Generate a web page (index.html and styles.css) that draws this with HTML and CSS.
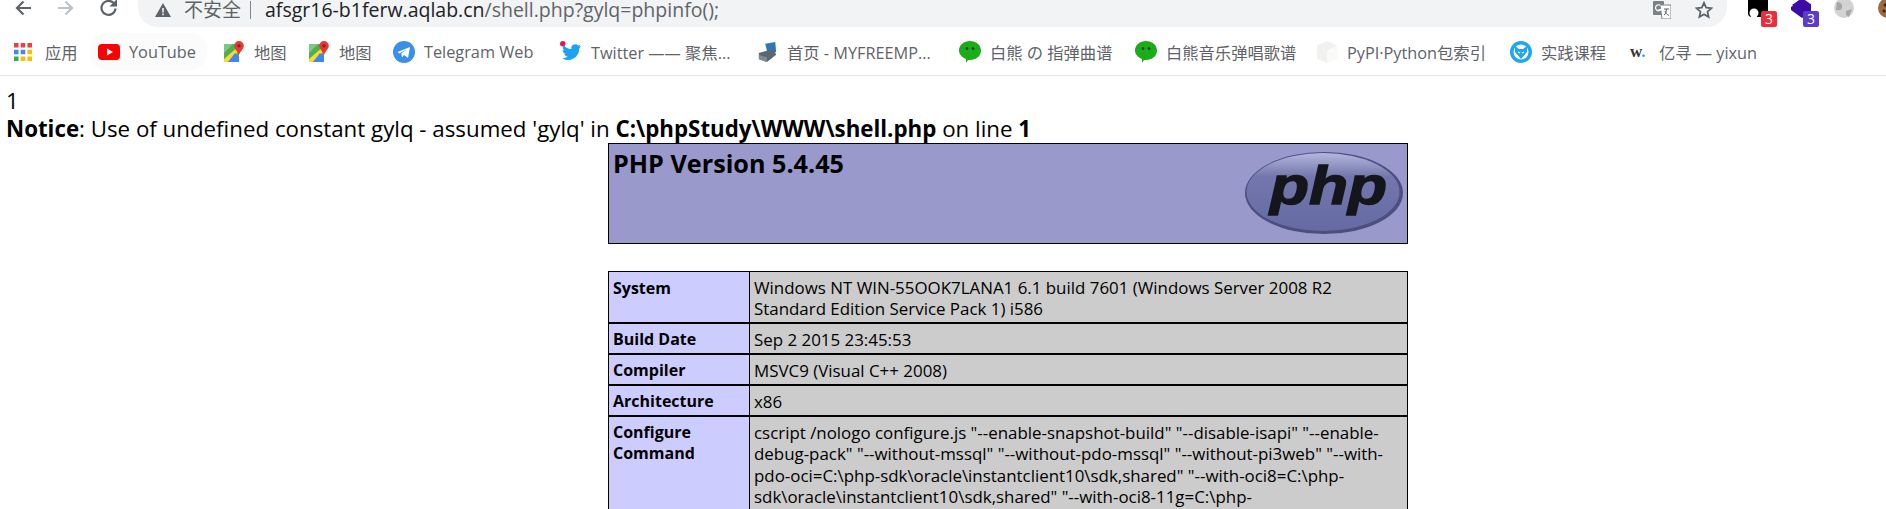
FILE: index.html
```html
<!DOCTYPE html>
<html lang="zh">
<head>
<meta charset="utf-8">
<title>phpinfo()</title>
<link rel="stylesheet" href="styles.css">
</head>
<body>
<header class="chrome">
  <div class="toolbar">
    <div class="nav">
      <svg class="nav-icon" viewBox="0 0 18 18"><path d="M17 9H3M9.500 2.500 3 9l6.500 6.500" fill="none" stroke="#5f6368" stroke-width="2.200"/></svg>
      <svg class="nav-icon" viewBox="0 0 18 18"><path d="M1 9h14M8.500 2.500 15 9l-6.500 6.500" fill="none" stroke="#bdc1c6" stroke-width="2.200"/></svg>
      <svg class="nav-icon" viewBox="0 0 18 18"><path d="M15.500 9.500A7 7 0 1 1 13.500 4" fill="none" stroke="#5f6368" stroke-width="2.200"/><path d="M17 0v7.500H9.500z" fill="#5f6368"/></svg>
    </div>
    <div class="omnibox">
      <svg class="warn" viewBox="0 0 16 14"><path d="M8 0 16 14H0z" fill="#5f6368"/><path d="M7.200 5h1.600v4.600H7.200zM7.200 10.600h1.600v1.600H7.200z" fill="#f1f3f4"/></svg>
      <span class="insecure">不安全</span>
      <span class="sep"></span>
      <span class="url"><span class="host">afsgr16-b1ferw.aqlab.cn</span>/shell.php?gylq=phpinfo();</span>
      <svg class="translate" viewBox="0 0 18 18"><rect x="0" y="0" width="11" height="14" rx="1" fill="#7d8185"/><path d="M7 4h11v14H9z" fill="#fff" stroke="#7d8185"/><path d="M11 8h5M13.500 8c0 3-1 5-2.500 6M12 10c.5 2 2 3.500 4 4.500" fill="none" stroke="#5f6368"/><path d="M7.500 4.500A3 3 0 1 0 8 8.500H5.500" fill="none" stroke="#fff" stroke-width="1.200"/></svg>
      <svg class="star" viewBox="0 0 18 18"><path d="m9 1.800 2.200 4.800 5.200.6-3.900 3.500 1.100 5.200L9 13.300l-4.600 2.600 1.100-5.200L1.600 7.200l5.200-.6z" fill="none" stroke="#5f6368" stroke-width="1.800"/></svg>
    </div>
    <div class="extensions">
      <div class="ext">
        <svg viewBox="0 0 20 20"><rect x="0" y="-6" width="20" height="23" rx="4" fill="#000"/><circle cx="6" cy="13" r="4.500" fill="#fff"/></svg>
        <span class="badge badge-red">3</span>
      </div>
      <div class="ext">
        <svg viewBox="0 0 20 20"><path d="M11-2 21 5 11 12 1 5z" fill="#3c0ca8"/><path d="M0 7l3-2 8 6 8-6 2 2v3l-10 8-11-8z" fill="#3c0ca8"/></svg>
        <span class="badge badge-purple">3</span>
      </div>
      <svg class="ext-globe" viewBox="0 0 20 20"><circle cx="10" cy="8" r="10" fill="#d3d3d3"/><path d="M3 2c4 0 6 3 5 6s-4 2-6 2zM12 11l6-2-3 8-3-2z" fill="#a6a6a6"/></svg>
      <svg class="ext-cookie" viewBox="0 0 20 20"><circle cx="11" cy="8" r="10" fill="#9a6a42"/><circle cx="8" cy="5" r="1.500" fill="#3d2412"/><circle cx="7" cy="11" r="1.500" fill="#3d2412"/></svg>
    </div>
  </div>
  <nav class="bookmarks">
    <a class="bm bm-apps">
      <svg class="bm-icon apps" viewBox="0 0 18 18"><g fill="#ea4335"><rect width="4.500" height="4.500"/><rect x="6.750" width="4.500" height="4.500"/><rect x="13.500" width="4.500" height="4.500"/></g><g fill="#4285f4"><rect y="6.750" width="4.500" height="4.500"/><rect x="6.750" y="6.750" width="4.500" height="4.500"/></g><rect x="13.500" y="6.750" width="4.500" height="4.500" fill="#fbbc04"/><rect y="13.500" width="4.500" height="4.500" fill="#34a853"/><g fill="#fbbc04"><rect x="6.750" y="13.500" width="4.500" height="4.500"/><rect x="13.500" y="13.500" width="4.500" height="4.500"/></g></svg>
      <span>应用</span>
    </a>
    <a class="bm bm-yt">
      <svg class="bm-icon" viewBox="0 0 22 16"><rect width="22" height="16" rx="4" fill="#f00"/><path d="m9 4.500 6 3.500-6 3.500z" fill="#fff"/></svg>
      <span>YouTube</span>
    </a>
    <a class="bm bm-map">
      <svg class="bm-icon" viewBox="0 0 20 22"><path d="M0 3h15v18H0z" fill="#4caf50"/><path d="M0 3h9L0 12z" fill="#81c784"/><path d="M0 18 15 5v5L4 21H0z" fill="#fdd835"/><path d="M4 21h11v-6l-4-3z" fill="#4285f4"/><path d="M15 0a4.800 4.800 0 0 1 4.800 4.800C19.800 8 16.500 10 15 14c-1.500-4-4.800-6-4.800-9.200A4.800 4.800 0 0 1 15 0z" fill="#e53935"/><circle cx="15" cy="4.800" r="1.600" fill="#8e1c17"/></svg>
      <span>地图</span>
    </a>
    <a class="bm bm-map">
      <svg class="bm-icon" viewBox="0 0 20 22"><path d="M0 3h15v18H0z" fill="#4caf50"/><path d="M0 3h9L0 12z" fill="#81c784"/><path d="M0 18 15 5v5L4 21H0z" fill="#fdd835"/><path d="M4 21h11v-6l-4-3z" fill="#4285f4"/><path d="M15 0a4.800 4.800 0 0 1 4.800 4.800C19.800 8 16.500 10 15 14c-1.500-4-4.800-6-4.800-9.200A4.800 4.800 0 0 1 15 0z" fill="#e53935"/><circle cx="15" cy="4.800" r="1.600" fill="#8e1c17"/></svg>
      <span>地图</span>
    </a>
    <a class="bm bm-tg">
      <svg class="bm-icon" viewBox="0 0 22 22"><circle cx="11" cy="11" r="11" fill="#3b8fe8"/><path d="M4.500 11 17 6l-2 11-4-3-2 2.500-.7-4L14 8l-7.500 4.500z" fill="#fff"/></svg>
      <span>Telegram Web</span>
    </a>
    <a class="bm bm-tw">
      <svg class="bm-icon" viewBox="0 0 20 20"><circle cx="2.500" cy="2.500" r="2.500" fill="#d81b60"/><path d="M19 4.500c-.7.400-1.300.5-2 .6.700-.4 1.200-1 1.500-1.800-.7.400-1.400.7-2.100.8a3.500 3.500 0 0 0-6 3.200C7.500 7.100 5 5.800 3 3.800c-1 1.700-.5 3.800 1 4.800-.6 0-1.100-.2-1.600-.4 0 1.700 1.200 3.100 2.800 3.500-.5.100-1 .1-1.500 0 .4 1.400 1.800 2.400 3.300 2.400A7 7 0 0 1 2 15.600 10 10 0 0 0 17.400 7c.6-.7 1.200-1.500 1.600-2.500z" fill="#1da1f2"/></svg>
      <span>Twitter —— 聚焦...</span>
    </a>
    <a class="bm bm-mf">
      <svg class="bm-icon" viewBox="0 0 22 24"><path d="M9 3 20 1l1 11-9 3z" fill="#2f78b8"/><path d="M2 13 18 9l3 6-10 8-8-3z" fill="#5b6770"/><path d="M2 15l9 3v5l-9-3z" fill="#7f8a92"/></svg>
      <span>首页 - MYFREEMP...</span>
    </a>
    <a class="bm bm-wx">
      <svg class="bm-icon" viewBox="0 0 22 22"><path d="M11 0c6 0 11 4 11 9.500S17 19 11 19c-.7 0-1.300 0-2-.1L7 22v-4C3 16.500 0 13.300 0 9.500 0 4 5 0 11 0z" fill="#1aad19"/><circle cx="8" cy="7.500" r="1.300" fill="#0b3d0b"/><circle cx="14" cy="7.500" r="1.300" fill="#0b3d0b"/></svg>
      <span>白熊 の 指弹曲谱</span>
    </a>
    <a class="bm bm-wx2">
      <svg class="bm-icon" viewBox="0 0 22 22"><path d="M11 0c6 0 11 4 11 9.500S17 19 11 19c-.7 0-1.300 0-2-.1L7 22v-4C3 16.500 0 13.300 0 9.500 0 4 5 0 11 0z" fill="#1aad19"/><circle cx="8" cy="7.500" r="1.300" fill="#0b3d0b"/><circle cx="14" cy="7.500" r="1.300" fill="#0b3d0b"/></svg>
      <span>白熊音乐弹唱歌谱</span>
    </a>
    <a class="bm bm-py">
      <svg class="bm-icon" viewBox="0 0 22 24"><path d="M11 0 22 5v14l-11 5L0 19V5z" fill="#f1f1ef"/><path d="M11 10 22 5v14l-11 5z" fill="#fafaf9"/></svg>
      <span>PyPI·Python包索引</span>
    </a>
    <a class="bm bm-sj">
      <svg class="bm-icon" viewBox="0 0 22 22"><circle cx="11" cy="11" r="11" fill="#1fa7ee"/><circle cx="11" cy="11" r="7.500" fill="#fff"/><path d="M5 5l4 3h4l4-3v6l-6 7-6-7z" fill="#1fa7ee"/><path d="M8 11l2 1M14 11l-2 1" stroke="#fff" stroke-width="1.200"/></svg>
      <span>实践课程</span>
    </a>
    <a class="bm bm-yx">
      <span class="wmark">w<span class="wdot">.</span></span>
      <span>亿寻 — yixun</span>
    </a>
  </nav>
</header>
<main class="page">
  <div class="output">1<br><b>Notice</b>: Use of undefined constant gylq - assumed 'gylq' in <b>C:\phpStudy\WWW\shell.php</b> on line <b>1</b></div>
  <div class="center">
    <table class="head">
      <tr>
        <td class="head-cell">
          <div class="head-row">
            <h1>PHP Version 5.4.45</h1>
            <svg class="logo" viewBox="0 0 160 84" role="img" aria-label="PHP logo">
              <defs>
                <linearGradient id="lg" x1="0" y1="0" x2="0" y2="1"><stop offset="0" stop-color="#b4b8dc"/><stop offset=".3" stop-color="#7377ad"/><stop offset="1" stop-color="#666aa3"/></linearGradient>
              </defs>
              <ellipse cx="80" cy="42" rx="79" ry="41" fill="#4c4f7e"/>
              <ellipse cx="79" cy="41" rx="76.500" ry="39" fill="url(#lg)"/>
              <text x="26" y="53" textLength="117" lengthAdjust="spacingAndGlyphs" class="logo-text">php</text>
            </svg>
          </div>
        </td>
      </tr>
    </table>
    <table class="info">
      <tr class="r2"><th>System</th><td>Windows NT WIN-55OOK7LANA1 6.1 build 7601 (Windows Server 2008 R2 Standard Edition Service Pack 1) i586</td></tr>
      <tr class="r1"><th>Build Date</th><td>Sep 2 2015 23:45:53</td></tr>
      <tr class="r1"><th>Compiler</th><td>MSVC9 (Visual C++ 2008)</td></tr>
      <tr class="r1"><th>Architecture</th><td>x86</td></tr>
      <tr class="r4"><th>Configure Command</th><td>cscript /nologo configure.js "--enable-snapshot-build" "--disable-isapi" "--enable-debug-pack" "--without-mssql" "--without-pdo-mssql" "--without-pi3web" "--with-pdo-oci=C:\php-sdk\oracle\instantclient10\sdk,shared" "--with-oci8=C:\php-sdk\oracle\instantclient10\sdk,shared" "--with-oci8-11g=C:\php-sdk\oracle\instantclient11\sdk,shared" "--enable-object-out-dir=../obj/" "--enable-com-dotnet=shared"</td></tr>
    </table>
  </div>
</main>
</body>
</html>
```
FILE: styles.css
```css
* { box-sizing: border-box; }
html, body { margin: 0; height: 509px; overflow: hidden; background: #fff; }
body { font-family: "Open Sans", "Noto Sans CJK SC", sans-serif; color: #000; }

.chrome { height: 76px; border-bottom: 1px solid #e4e5e7; background: #fff; }
.toolbar { height: 27px; display: flex; align-items: flex-start; }
.nav { width: 138px; padding-left: 14px; display: flex; gap: 25px; flex: none; margin-top: -1px; }
.nav-icon { width: 18px; height: 18px; flex: none; }
.omnibox { width: 1589px; flex: none; height: 27px; background: #f1f3f4; border-radius: 0 0 20px 20px; display: flex; align-items: center; padding: 0 14px 7px 17px; }
.warn { width: 16px; height: 14px; flex: none; margin-right: 13px; }
.insecure { font-size: 19px; color: #5f6368; line-height: 20px; }
.sep { width: 1px; height: 18px; background: #80868b; margin: 0 14px 0 9px; }
.url { font-size: 19.500px; line-height: 20px; color: #5f6368; flex: 1; white-space: nowrap; }
.host { color: #202124; }
.translate { width: 18px; height: 18px; margin-right: 24px; }
.star { width: 18px; height: 18px; }
.extensions { flex: none; width: 170px; display: flex; padding-left: 21px; gap: 23px; }
.ext { position: relative; width: 20px; height: 20px; flex: none; }
.ext svg { width: 20px; height: 20px; display: block; }
.badge { position: absolute; left: 13px; top: 11px; width: 16px; height: 16px; border-radius: 2px; color: #fff; font-size: 14px; line-height: 16px; text-align: center; }
.badge-red { background: #ee2d3c; }
.badge-purple { background: #5b3cc4; left: 12px; }
.ext-globe { width: 20px; height: 20px; flex: none; }
.ext-cookie { width: 20px; height: 20px; flex: none; }

.bookmarks { height: 48px; display: flex; align-items: center; padding: 1px 0 0 14px; white-space: nowrap; }
.bm { display: flex; align-items: center; gap: 9px; font-size: 16.300px; color: #5f6368; flex: none; }
.bm-icon { width: 22px; height: 22px; flex: none; }
.apps { width: 18px; height: 18px; margin-right: 4px; }
.bm-apps { width: 84px; }
.bm-yt { width: 117px; height: 37px; margin: 0 16px 0 -8px; padding-left: 8px; background: #fbfbfc; border-radius: 16px; }
.bm-map { width: 85px; }
.bm-tg { width: 167px; }
.bm-tw { width: 196px; }
.bm-mf { width: 203px; }
.bm-wx { width: 176px; }
.bm-wx2 { width: 181px; }
.bm-py { width: 194px; }
.bm-sj { width: 120px; }
.bm-yx { width: 130px; }
.wmark { font: bold 17px "Liberation Serif", serif; color: #333; width: 20px; }
.wdot { color: #1fa7ee; }

.output { font-size: 22.300px; line-height: 28px; padding: 11px 0 0 6px; white-space: nowrap; height: 67px; }
.center { margin-left: 608px; width: 800px; }
table { border-collapse: collapse; width: 800px; table-layout: fixed; }
.head { margin-bottom: 27px; }
.head-cell { background: #9999cc; border: 1px solid #000; height: 100px; padding: 0 3px 0 4px; vertical-align: top; }
.head-row { display: flex; justify-content: space-between; }
h1 { font-size: 25.200px; font-weight: 700; margin: 3px 0 0; line-height: 32px; }
.logo { width: 160px; height: 84px; margin-top: 7px; flex: none; }
.logo-text { font: italic bold 54px "Liberation Sans", sans-serif; fill: #15151c; stroke: #15151c; stroke-width: 1.400px; }
.info th, .info td { border: 1px solid #000; vertical-align: top; text-align: left; font-size: 16.900px; line-height: 21px; padding: 5px 10px 2px 4px; }
.info th { width: 141px; background: #ccccff; font-weight: 700; font-size: 16px; }
.info td { background: #cccccc; font-weight: 400; }
.r2 th { padding-top: 6px; }
.r2 th, .r2 td { height: 51px; }
.r1 th, .r1 td { height: 31px; padding-top: 5px; padding-bottom: 2px; border-top-width: 2px; }
.r4 th, .r4 td { padding-top: 5px; border-top-width: 2px; line-height: 21.500px; }
```
